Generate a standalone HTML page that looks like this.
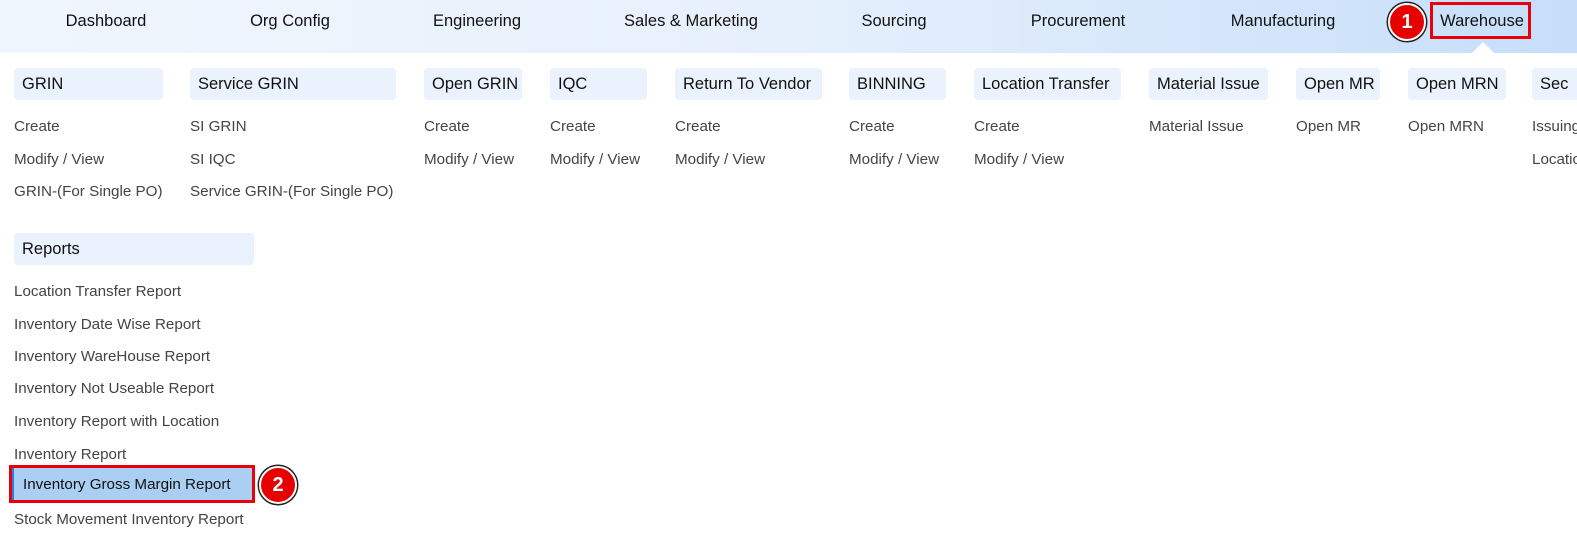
<!DOCTYPE html>
<html><head><meta charset="utf-8"><style>
*{margin:0;padding:0;box-sizing:border-box}
body{width:1577px;height:538px;overflow:hidden;background:#fff;font-family:"Liberation Sans",Arial,sans-serif;position:relative;color:#222}
.nav{position:absolute;left:0;top:0;width:1577px;height:53px;background:linear-gradient(90deg,#f0f6fd 0%,#e6f0fc 50%,#c6defa 100%)}
.n{position:absolute;top:12px;font-size:16.5px;color:#111;transform:translateX(-50%);white-space:nowrap}
.h{position:absolute;height:32px;background:#e9f2fd;border-radius:4px;font-size:16.5px;color:#111;padding:7px 0 0 8px;white-space:nowrap;overflow:hidden}
.i{position:absolute;font-size:15.2px;color:#444;white-space:nowrap;transform:translateY(-35%)}
.badge{position:absolute;width:38px;height:38px;border-radius:50%;background:#e60000;border:2px solid #fff;box-shadow:0 0 0 1.5px #222;color:#fff;font-weight:bold;font-size:20px;text-align:center;line-height:34px}
</style></head><body>
<div class="nav"></div>
<div class="n" style="left:106px">Dashboard</div>
<div class="n" style="left:290px">Org Config</div>
<div class="n" style="left:477px">Engineering</div>
<div class="n" style="left:691px">Sales &amp; Marketing</div>
<div class="n" style="left:894px">Sourcing</div>
<div class="n" style="left:1078px">Procurement</div>
<div class="n" style="left:1283px">Manufacturing</div>
<div class="n" style="left:1482px">Warehouse</div>
<div style="position:absolute;left:1430px;top:2px;width:101px;height:37px;border:3px solid #e8000b"></div>
<div style="position:absolute;left:1471px;top:42px;width:0;height:0;border-left:12px solid transparent;border-right:12px solid transparent;border-bottom:12px solid #fff"></div>
<div class="badge" style="left:1388px;top:3px">1</div>

<div class="h" style="left:14px;top:68px;width:149px">GRIN</div>
<div class="h" style="left:190px;top:68px;width:206px">Service GRIN</div>
<div class="h" style="left:424px;top:68px;width:98px">Open GRIN</div>
<div class="h" style="left:550px;top:68px;width:97px">IQC</div>
<div class="h" style="left:675px;top:68px;width:147px">Return To Vendor</div>
<div class="h" style="left:849px;top:68px;width:97px">BINNING</div>
<div class="h" style="left:974px;top:68px;width:147px">Location Transfer</div>
<div class="h" style="left:1149px;top:68px;width:119px">Material Issue</div>
<div class="h" style="left:1296px;top:68px;width:84px">Open MR</div>
<div class="h" style="left:1408px;top:68px;width:98px">Open MRN</div>
<div class="h" style="left:1532px;top:68px;width:60px">Sec</div>

<div class="i" style="left:14px;top:124px">Create</div>
<div class="i" style="left:14px;top:157px">Modify / View</div>
<div class="i" style="left:14px;top:189px">GRIN-(For Single PO)</div>
<div class="i" style="left:190px;top:124px">SI GRIN</div>
<div class="i" style="left:190px;top:157px">SI IQC</div>
<div class="i" style="left:190px;top:189px">Service GRIN-(For Single PO)</div>
<div class="i" style="left:424px;top:124px">Create</div>
<div class="i" style="left:424px;top:157px">Modify / View</div>
<div class="i" style="left:550px;top:124px">Create</div>
<div class="i" style="left:550px;top:157px">Modify / View</div>
<div class="i" style="left:675px;top:124px">Create</div>
<div class="i" style="left:675px;top:157px">Modify / View</div>
<div class="i" style="left:849px;top:124px">Create</div>
<div class="i" style="left:849px;top:157px">Modify / View</div>
<div class="i" style="left:974px;top:124px">Create</div>
<div class="i" style="left:974px;top:157px">Modify / View</div>
<div class="i" style="left:1149px;top:124px">Material Issue</div>
<div class="i" style="left:1296px;top:124px">Open MR</div>
<div class="i" style="left:1408px;top:124px">Open MRN</div>
<div class="i" style="left:1532px;top:124px">Issuing</div>
<div class="i" style="left:1532px;top:157px">Location</div>

<div class="h" style="left:14px;top:233px;width:240px">Reports</div>
<div class="i" style="left:14px;top:289px">Location Transfer Report</div>
<div class="i" style="left:14px;top:322px">Inventory Date Wise Report</div>
<div class="i" style="left:14px;top:354px">Inventory WareHouse Report</div>
<div class="i" style="left:14px;top:386px">Inventory Not Useable Report</div>
<div class="i" style="left:14px;top:419px">Inventory Report with Location</div>
<div class="i" style="left:14px;top:452px">Inventory Report</div>
<div style="position:absolute;left:9px;top:465px;width:246px;height:38px;border:3px solid #e8000b"></div>
<div style="position:absolute;left:12px;top:468px;width:240px;height:32px;background:#aacff2;border-left:2px solid #2a7de1;font-size:15.2px;color:#111;padding:8px 0 0 9px;white-space:nowrap">Inventory Gross Margin Report</div>
<div class="badge" style="left:259px;top:466px">2</div>
<div class="i" style="left:14px;top:517px">Stock Movement Inventory Report</div>
</body></html>
